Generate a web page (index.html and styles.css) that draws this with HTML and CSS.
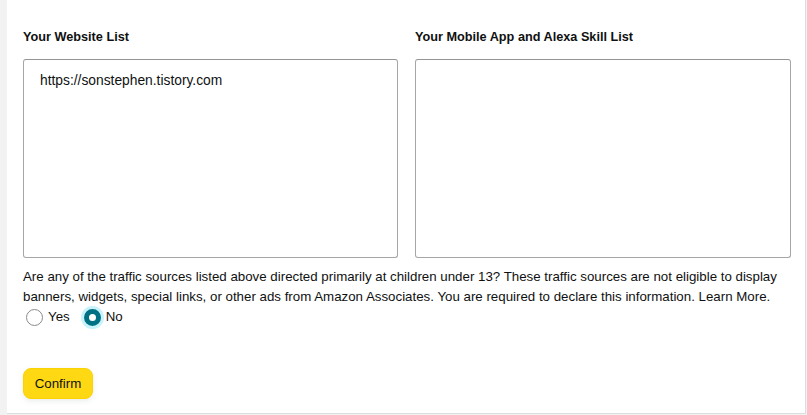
FILE: index.html
```html
<!DOCTYPE html>
<html lang="en">
<head>
<meta charset="UTF-8" />
<meta name="viewport" content="width=device-width, initial-scale=1.0" />
<title>Associates Profile</title>
<link rel="stylesheet" href="styles.css">
</head>
<body>

<!-- ───── PROFILE CARD ───── -->
<div class="card">
  <div class="lists">
    <div class="list">
      <label class="list-title" for="webList">Your Website List</label>
      <textarea id="webList" class="list-box">https://sonstephen.tistory.com</textarea>
    </div>
    <div class="list">
      <label class="list-title" for="appList">Your Mobile App and Alexa Skill List</label>
      <textarea id="appList" class="list-box"></textarea>
    </div>
  </div>

  <p class="question">Are any of the traffic sources listed above directed primarily at children under 13? These traffic sources are not eligible to display banners, widgets, special links, or other ads from Amazon Associates. You are required to declare this information. Learn More.</p>

  <div class="choices">
    <label class="choice"><input type="radio" name="kids" value="yes"><span>Yes</span></label>
    <label class="choice"><input type="radio" name="kids" value="no" checked><span>No</span></label>
  </div>

  <button class="confirm">Confirm</button>
</div>

</body>
</html>
```

FILE: styles.css
```css
/* ───── RESET ───── */
*{margin:0;padding:0;box-sizing:border-box}

/* ───── PAGE ───── */
body{
  background:#f2f2f2;color:#0f1111;
  font-family:"Liberation Sans",Arial,sans-serif;font-size:13.3px;line-height:20px;
}
.card{
  margin-left:7px;width:799px;height:414px;
  background:#fff;border-right:1px solid #ddd;border-bottom:1px solid #ddd;
  padding:28px 14px 0 16px;
}

/* list boxes */
.lists{display:grid;grid-template-columns:375px 376px;column-gap:17px}
.list-title{display:block;font-weight:700;font-size:12.7px;line-height:19px;margin-bottom:12px}
.list-box{
  display:block;width:100%;height:199px;resize:none;
  border:1px solid #a6a6a6;border-top-color:#949494;border-radius:3px;
  padding:11px 16px;font:inherit;font-size:13.8px;line-height:19px;color:#0f1111;outline:none;
}

/* question */
.question{margin-top:9px}

/* radios */
.choices{display:flex;align-items:center;gap:14px;padding-left:3px;height:20px}
.choice{display:flex;align-items:center;gap:5px;cursor:pointer}
.choice input{
  appearance:none;width:17px;height:17px;border-radius:50%;
  border:1px solid #888c8c;background:#fff;margin:0;
}
.choice input:checked{
  border:5px solid #007185;background:#fff;
  box-shadow:0 0 0 3px #c8f3fa;
}

/* button */
.confirm{
  margin-top:41px;width:70px;height:31px;
  background:#ffd814;border:1px solid #fcd200;border-radius:8px;
  box-shadow:0 2px 5px rgba(213,217,217,.5);
  font:inherit;color:#0f1111;cursor:pointer;
}
```
